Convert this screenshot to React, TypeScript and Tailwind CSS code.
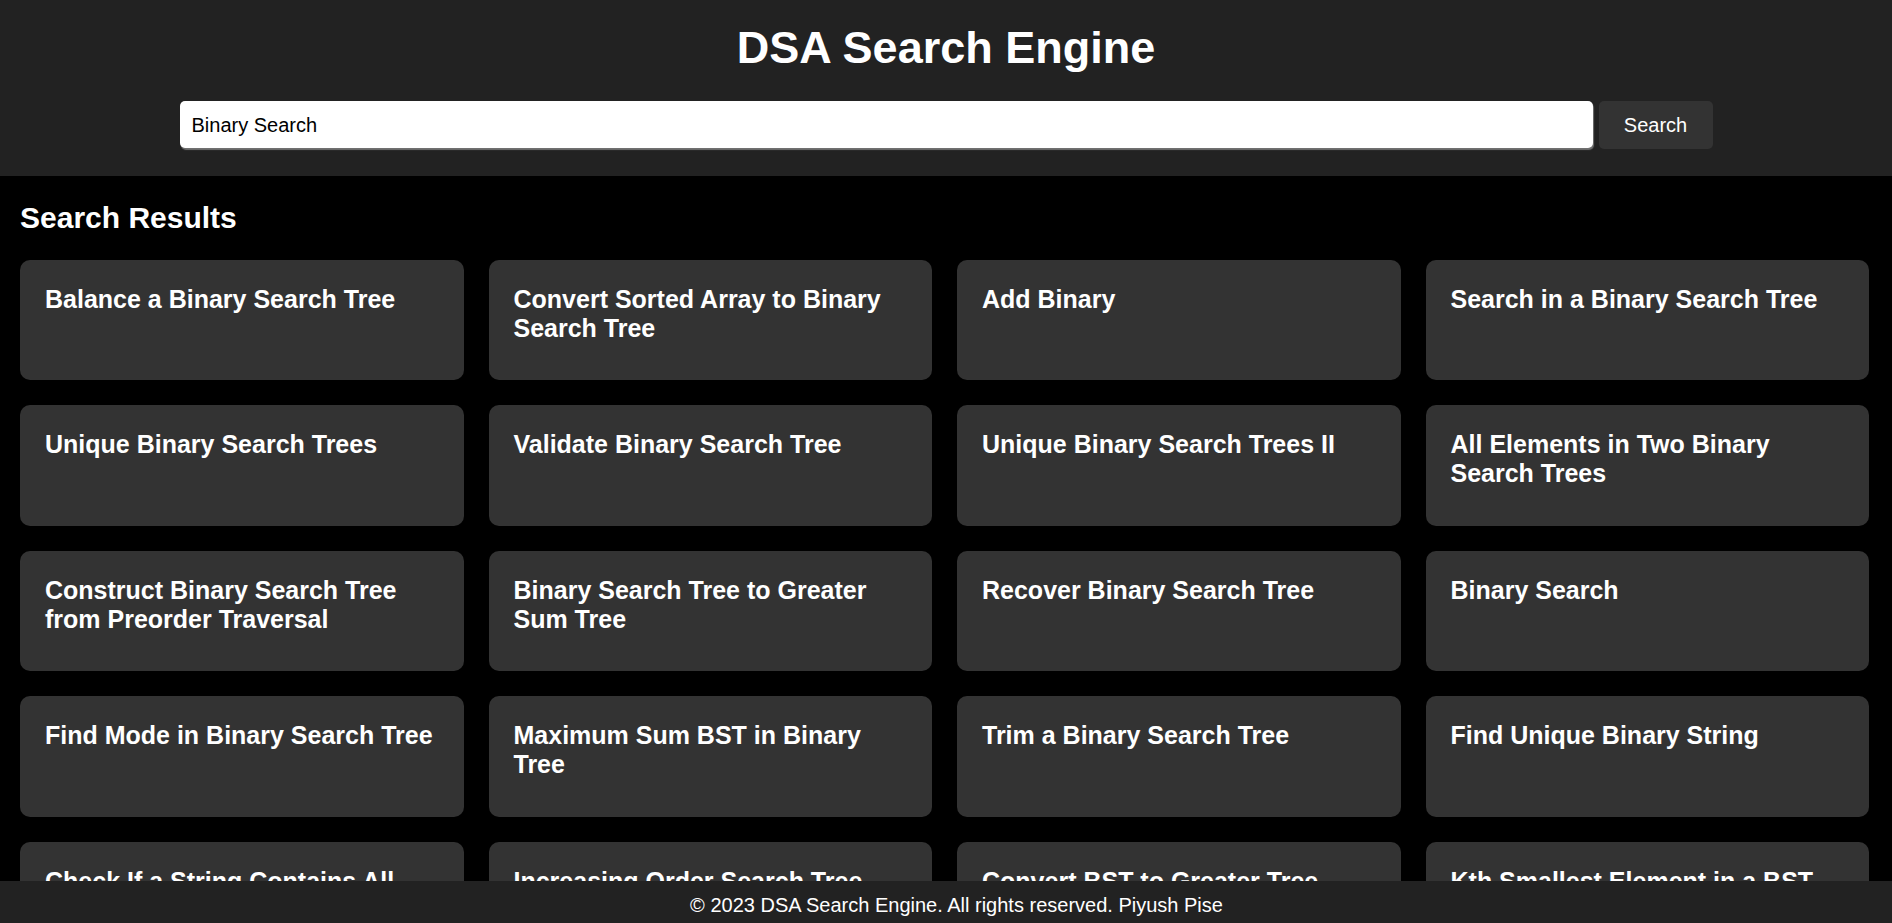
import React from "react";

const results: string[] = [
  "Balance a Binary Search Tree",
  "Convert Sorted Array to Binary Search Tree",
  "Add Binary",
  "Search in a Binary Search Tree",
  "Unique Binary Search Trees",
  "Validate Binary Search Tree",
  "Unique Binary Search Trees II",
  "All Elements in Two Binary Search Trees",
  "Construct Binary Search Tree from Preorder Traversal",
  "Binary Search Tree to Greater Sum Tree",
  "Recover Binary Search Tree",
  "Binary Search",
  "Find Mode in Binary Search Tree",
  "Maximum Sum BST in Binary Tree",
  "Trim a Binary Search Tree",
  "Find Unique Binary String",
  "Check If a String Contains All Binary Codes of Size K",
  "Increasing Order Search Tree",
  "Convert BST to Greater Tree",
  "Kth Smallest Element in a BST",
  "Binary Tree Inorder Traversal",
  "Lowest Common Ancestor of a Binary Search Tree",
  "Delete Node in a BST",
  "Insert into a Binary Search Tree",
];

export default function App() {
  return (
    <div className="min-h-screen bg-black text-white font-['Liberation_Sans',Arial,sans-serif]">
      <header className="bg-[#222222] h-[176px] pt-[22px] flex flex-col items-center">
        <h1 className="text-[45px] font-bold leading-[normal]">DSA Search Engine</h1>
        <div className="mt-[27px] flex gap-[6px]">
          <input
            type="text"
            defaultValue="Binary Search"
            className="w-[1413px] h-[47px] bg-white text-black text-[20px] pl-[12px] pr-[12px] pt-[2px] rounded-[5px] outline-none shadow-[1px_2px_1px_#707070]"
          />
          <button className="w-[114px] h-[48px] bg-[#333333] text-white text-[20px] rounded-[5px] leading-[normal] pt-[1px]">
            Search
          </button>
        </div>
      </header>
      <main className="pl-5 pr-[23px] pt-[25px] pb-[80px]">
        <h2 className="text-[30px] font-bold leading-[normal]">Search Results</h2>
        <div className="mt-[24.5px] grid grid-cols-4 gap-[25px]">
          {results.map((r) => (
            <div key={r} className="h-[120.5px] rounded-[10px] bg-[#333333] pt-[25px] px-[25px]">
              <h3 className="text-[25px] font-bold leading-[normal]">{r}</h3>
            </div>
          ))}
        </div>
      </main>
      <footer className="fixed bottom-0 inset-x-0 h-[42px] bg-[#222222] text-center text-[20px] leading-[normal] pt-[13px] pl-[21px]">
        © 2023 DSA Search Engine. All rights reserved. Piyush Pise
      </footer>
    </div>
  );
}
